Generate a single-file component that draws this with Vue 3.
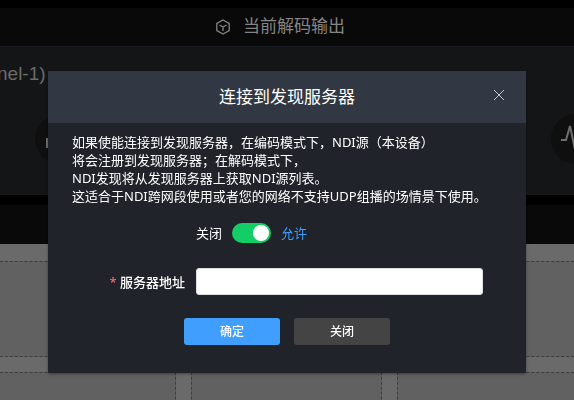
<script setup>
import { ref } from 'vue';

const visible = ref(true);
const enabled = ref(true);
const address = ref('');

const notes = [
  '如果使能连接到发现服务器，在编码模式下，NDI源（本设备）',
  '将会注册到发现服务器；在解码模式下，',
  'NDI发现将从发现服务器上获取NDI源列表。',
  '这适合于NDI跨网段使用或者您的网络不支持UDP组播的场情景下使用。',
];

const close = () => {
  visible.value = false;
};
</script>

<template>
  <div class="page">
    <header class="bar">
      <svg class="cube" viewBox="0 0 16 16" aria-hidden="true">
        <path d="M8 1 L14.2 4.5 V11.5 L8 15 L1.8 11.5 V4.5 Z M4.5 6 L8 8 L11.5 6 M8 8 V12" />
      </svg>
      <h1>当前解码输出</h1>
    </header>

    <section class="channel">
      <div class="channel-name">nel-1)</div>
      <div class="tools">
        <span class="tool">
          <svg viewBox="0 0 50 50" aria-hidden="true">
            <path d="M12 34 V24 M19 34 V18 M26 34 V22 M33 34 V15" />
          </svg>
        </span>
        <span class="tool">
          <svg viewBox="0 0 50 50" aria-hidden="true">
            <path d="M10 26 H15 L19 12 L25 40 L31 20 L34 26 H40" />
          </svg>
        </span>
      </div>
    </section>

    <div class="bar strip"></div>

    <div class="grid">
      <div v-for="n in 6" :key="n" class="cell"></div>
    </div>

    <div v-if="visible" class="overlay">
      <section class="dialog" role="dialog" aria-labelledby="dialog-title">
        <header class="dialog-header">
          <h2 id="dialog-title">连接到发现服务器</h2>
          <button class="close" type="button" aria-label="关闭" @click="close">
            <svg viewBox="0 0 12 12" aria-hidden="true"><path d="M1 1 L11 11 M11 1 L1 11" /></svg>
          </button>
        </header>

        <form class="dialog-body" @submit.prevent="close">
          <p class="notes">
            <span v-for="line in notes" :key="line">{{ line }}</span>
          </p>

          <div class="switch-row">
            <span>关闭</span>
            <input id="enabled" v-model="enabled" class="switch" type="checkbox" />
            <label for="enabled" :class="{ active: enabled }">允许</label>
          </div>

          <div class="field">
            <label for="address"><span class="required">*</span> 服务器地址</label>
            <input id="address" v-model="address" type="text" />
          </div>

          <div class="actions">
            <button class="primary" type="submit">确定</button>
            <button type="button" @click="close">关闭</button>
          </div>
        </form>
      </section>
    </div>
  </div>
</template>

<style>
body {
  background: #000;
}
</style>

<style scoped>
* {
  box-sizing: border-box;
}

.page {
  display: flex;
  flex-direction: column;
  height: 100vh;
  padding-top: 8px;
  overflow: hidden;
  background: #000;
  font-family: 'Liberation Sans', 'Noto Sans CJK SC', sans-serif;
  font-size: 13px;
}

.bar {
  display: flex;
  flex: none;
  align-items: center;
  justify-content: center;
  gap: 12px;
  height: 38px;
  padding-right: 14px;
  background: #090909;
  color: #858585;
}

.cube {
  width: 16px;
  height: 16px;
  fill: none;
  stroke: currentColor;
  stroke-width: 1.3;
}

h1,
h2 {
  margin: 0;
  font-size: 17px;
  font-weight: 400;
  line-height: 24px;
}

.channel {
  flex: none;
  height: 149px;
  padding-top: 16px;
  border-top: 1px solid #171b1f;
  background: #141517;
}

.channel-name {
  margin-left: -3px;
  color: #6b6b6b;
  font-size: 19px;
  line-height: 22px;
}

.tools {
  display: flex;
  justify-content: space-between;
  margin: 29px -27px 0 35px;
}

.tool {
  width: 50px;
  height: 50px;
  border-radius: 50%;
  background: #0f0f10;
}

.tool svg {
  display: block;
  fill: none;
  stroke: #6f6f6f;
  stroke-width: 2;
}

.strip {
  height: 39px;
  margin-top: 10px;
}

.grid {
  display: grid;
  flex: 1;
  grid-template-columns: 191px 191px minmax(191px, 1fr);
  grid-auto-rows: 96px;
  gap: 15px;
  margin: 0 -15px;
  padding-top: 17px;
  background: #6a6a6a;
}

.cell {
  border: 1px dashed #3c3c3c;
  background: #616161;
}

.overlay {
  position: fixed;
  inset: 0;
  padding: 71px 48px 0;
}

.dialog {
  border-radius: 1px;
  background: #20232a;
  color: #fff;
  font-family: 'Noto Sans', 'Noto Sans CJK SC', sans-serif;
  box-shadow: 0 1px 3px rgba(0, 0, 0, 0.4);
}

.dialog-header {
  display: grid;
  grid-template-columns: 32px 1fr 32px;
  align-items: center;
  height: 52px;
  padding: 0 11px;
  background: #323843;
}

h2 {
  grid-column: 2;
  text-align: center;
}

.close {
  display: flex;
  align-items: center;
  justify-content: center;
  height: 32px;
  padding: 0 0 4px;
  border: 0;
  background: none;
  color: #c8c8c8;
  cursor: pointer;
}

.close svg {
  width: 12px;
  height: 12px;
  stroke: currentColor;
  stroke-width: 1;
}

.dialog-body {
  padding: 10px 43px 28px 24px;
}

.notes {
  margin: 0;
  line-height: 18px;
}

.notes span {
  display: block;
  white-space: nowrap;
}

.switch-row {
  display: flex;
  align-items: center;
  gap: 10px;
  height: 20px;
  margin: 18px 0 25px 124px;
  line-height: 18px;
}

.active {
  color: #409eff;
}

.switch {
  display: flex;
  align-items: center;
  justify-content: flex-start;
  width: 39px;
  height: 20px;
  margin: 0;
  padding: 2px;
  border-radius: 10px;
  appearance: none;
  background: #686868;
  cursor: pointer;
}

.switch::before {
  width: 16px;
  height: 16px;
  border-radius: 50%;
  background: #fff;
  content: '';
}

.switch:checked {
  justify-content: flex-end;
  background: #13ce66;
}

.field {
  display: grid;
  grid-template-columns: 113px 1fr;
  align-items: center;
  gap: 11px;
  line-height: 18px;
}

.field label {
  font-weight: 500;
  text-align: right;
}

.required {
  color: #f56c6c;
}

.field input {
  width: 100%;
  height: 27px;
  padding: 0 10px;
  border: 1px solid #dcdfe6;
  border-radius: 3px;
  background: #fff;
  font: inherit;
}

.actions {
  display: flex;
  justify-content: center;
  gap: 14px;
  margin: 23px -19px 0 0;
}

.actions button {
  width: 96px;
  height: 27px;
  padding: 0;
  border: 0;
  border-radius: 3px;
  background: #444;
  color: #fff;
  font-family: inherit;
  font-size: 12px;
  font-weight: 500;
  line-height: 18px;
  cursor: pointer;
}

.actions .primary {
  background: #409eff;
}
</style>
